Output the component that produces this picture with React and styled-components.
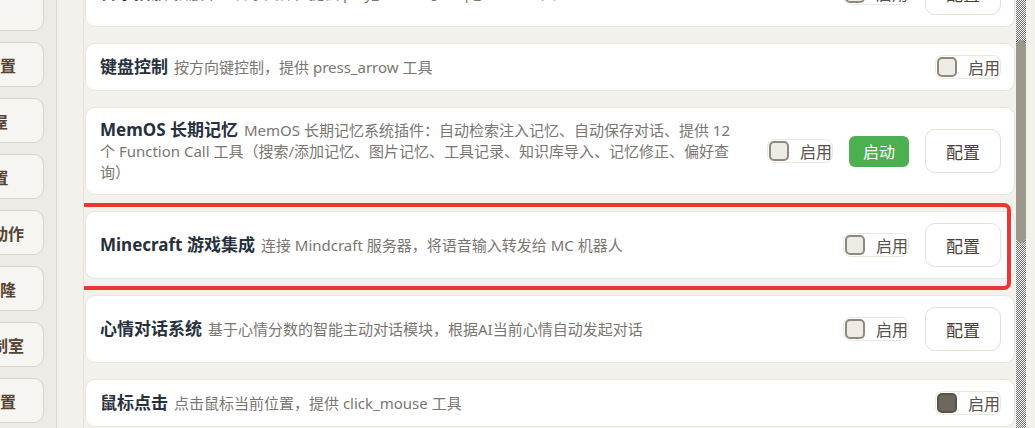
import React from 'react';
import styled, { createGlobalStyle } from 'styled-components';

const NAV = ['首页', '模型设置', '记忆屋', 'UI设置', '心情与动作', '声音克隆', '直播控制室', '高级设置'];

const PLUGINS = [
  { title: '音乐播放', desc: '播放本地音乐文件，提供 play_music 与 stop_music 工具', config: true },
  { title: '键盘控制', desc: '按方向键控制，提供 press_arrow 工具' },
  {
    title: 'MemOS 长期记忆',
    desc: 'MemOS 长期记忆系统插件：自动检索注入记忆、自动保存对话、提供 12 个 Function Call 工具（搜索/添加记忆、图片记忆、工具记录、知识库导入、记忆修正、偏好查询）',
    start: true,
    config: true
  },
  { title: 'Minecraft 游戏集成', desc: '连接 Mindcraft 服务器，将语音输入转发给 MC 机器人', config: true, highlight: true },
  { title: '心情对话系统', desc: '基于心情分数的智能主动对话模块，根据AI当前心情自动发起对话', config: true },
  { title: '鼠标点击', desc: '点击鼠标当前位置，提供 click_mouse 工具', checked: true }
];

export default function App() {
  return (
    <>
      <GlobalStyle />
      <Page>
        <Sidebar>
          <NavList>
            {NAV.map((name) => (
              <NavButton key={name}>{name}</NavButton>
            ))}
          </NavList>
        </Sidebar>
        <Main>
          <ListFrame>
            <PluginList>
              {PLUGINS.map((p) => (
                <Card key={p.title}>
                  <Info>
                    <Title>{p.title}</Title>
                    {p.desc}
                  </Info>
                  <Controls>
                    <Toggle>
                      <Box $checked={p.checked} />
                      启用
                    </Toggle>
                    {p.start && <StartButton>启动</StartButton>}
                    {p.config && <ConfigButton>配置</ConfigButton>}
                  </Controls>
                  {p.highlight && <Highlight />}
                </Card>
              ))}
            </PluginList>
          </ListFrame>
          <ScrollTrack>
            <ScrollThumb />
          </ScrollTrack>
        </Main>
      </Page>
    </>
  );
}

const GlobalStyle = createGlobalStyle`
  html, body {
    margin: 0;
    padding: 0;
    height: 100%;
  }
  body {
    background: #f3f1ec;
    font-family: "Noto Sans", "Noto Sans CJK SC", sans-serif;
    overflow: hidden;
  }
  #root {
    height: 100%;
  }
`;

const Page = styled.div`
  display: flex;
  height: 100vh;
  overflow: hidden;
`;

const Sidebar = styled.nav`
  width: 56px;
  flex: none;
  background: #ecebe6;
  border-right: 1px solid #dcd8d0;
  overflow: hidden;
`;

const NavList = styled.div`
  display: flex;
  flex-direction: column;
  align-items: flex-end;
  gap: 11px;
  padding-right: 12px;
  margin-top: -14px;
`;

const NavButton = styled.div`
  flex: none;
  width: 120px;
  height: 45px;
  box-sizing: border-box;
  display: flex;
  align-items: center;
  justify-content: center;
  background: #f6f5f1;
  border: 1px solid #d8d4cc;
  border-radius: 10px;
  font-family: "Noto Sans CJK SC", sans-serif;
  font-weight: 700;
  font-size: 16px;
  color: #574333;
  white-space: nowrap;
`;

const Main = styled.main`
  flex: 1;
  display: flex;
  padding: 0 9px 0 26px;
  min-width: 0;
`;

const ListFrame = styled.div`
  flex: 1;
  min-width: 0;
  border-left: 1px solid #e4e1da;
  padding: 0 1px;
  overflow: hidden;
`;

const PluginList = styled.div`
  display: flex;
  flex-direction: column;
  gap: 16px;
  margin-top: -41px;
`;

const Card = styled.div`
  position: relative;
  display: flex;
  align-items: center;
  gap: 24px;
  padding: 11px 13px 11px 14px;
  background: #fff;
  border: 1px solid #e9e6df;
  border-radius: 10px;
`;

const Info = styled.div`
  flex: 1;
  min-width: 0;
  font-size: 15px;
  line-height: 21px;
  color: #7a756f;
`;

const Title = styled.span`
  font-size: 17px;
  font-weight: 700;
  color: #27303c;
  margin-right: 6px;
`;

const Controls = styled.div`
  flex: none;
  display: flex;
  align-items: center;
  gap: 16px;
`;

const Toggle = styled.label`
  display: flex;
  align-items: center;
  gap: 11px;
  width: 66px;
  height: 24px;
  box-sizing: border-box;
  padding-left: 1px;
  background: #fff;
  border: 1px solid #ebe8e2;
  border-radius: 8px;
  font-size: 16px;
  color: #5b5048;
  white-space: nowrap;
`;

const Box = styled.span`
  flex: none;
  width: 20px;
  height: 20px;
  box-sizing: border-box;
  border: 2px solid ${(p) => (p.$checked ? '#58534a' : '#8e897f')};
  border-radius: 5px;
  background: ${(p) => (p.$checked ? '#6d685e' : '#eeebe5')};
`;

const StartButton = styled.button`
  width: 60px;
  height: 31px;
  border: none;
  border-radius: 6px;
  background: #4caf50;
  color: #fff;
  font-family: inherit;
  font-size: 16px;
  padding: 0;
`;

const ConfigButton = styled.button`
  width: 76px;
  height: 44px;
  background: #fff;
  border: 1px solid #e3e0d9;
  border-radius: 10px;
  color: #4a4036;
  font-family: inherit;
  font-size: 17px;
  padding: 0;
`;

const Highlight = styled.span`
  position: absolute;
  top: -9px;
  left: -12px;
  right: 3px;
  bottom: -12px;
  border: 4px solid #ec3535;
  border-radius: 7px;
  pointer-events: none;
`;

const ScrollTrack = styled.div`
  width: 10px;
  flex: none;
  background: repeating-conic-gradient(#707070 0 25%, #ffffff 0 50%) 0 0 / 2px 2px;
`;

const ScrollThumb = styled.div`
  margin-top: 40px;
  height: 203px;
  background: #9d988d;
  border-radius: 5px;
`;
